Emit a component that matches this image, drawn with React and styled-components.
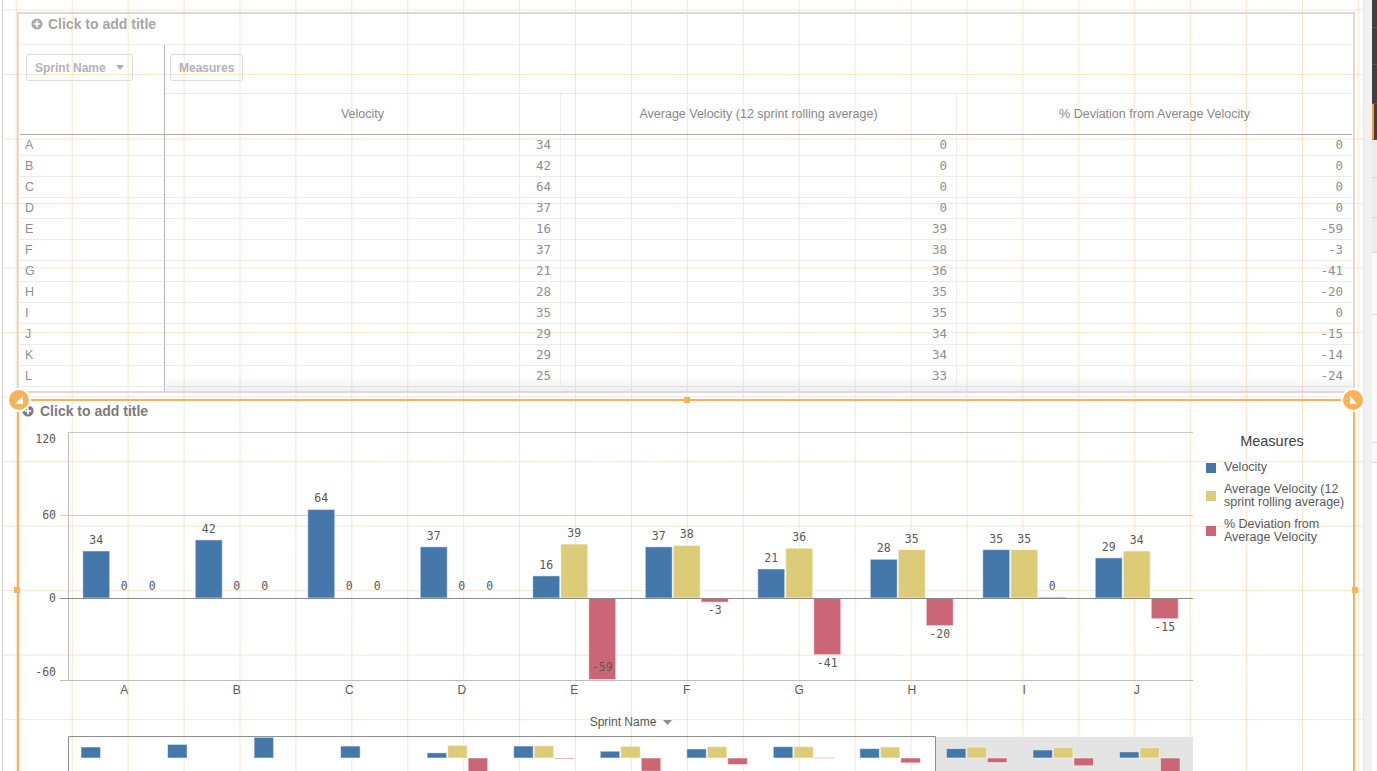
import React, { Fragment } from "react";
import styled, { createGlobalStyle } from "styled-components";

const GlobalStyle = createGlobalStyle`
	html, body {
		margin: 0;
		padding: 0;
		background: #ffffff;
		overflow: hidden;
	}
	body {
		font-family: "Liberation Sans", Arial, sans-serif;
	}
	* {
		box-sizing: border-box;
	}
`;

const sprints = [
	{ name: "A", velocity: 34, average: 0, deviation: 0 },
	{ name: "B", velocity: 42, average: 0, deviation: 0 },
	{ name: "C", velocity: 64, average: 0, deviation: 0 },
	{ name: "D", velocity: 37, average: 0, deviation: 0 },
	{ name: "E", velocity: 16, average: 39, deviation: -59 },
	{ name: "F", velocity: 37, average: 38, deviation: -3 },
	{ name: "G", velocity: 21, average: 36, deviation: -41 },
	{ name: "H", velocity: 28, average: 35, deviation: -20 },
	{ name: "I", velocity: 35, average: 35, deviation: 0 },
	{ name: "J", velocity: 29, average: 34, deviation: -15 },
	{ name: "K", velocity: 29, average: 34, deviation: -14 },
	{ name: "L", velocity: 25, average: 33, deviation: -24 },
	{ name: "M", velocity: 19, average: 32, deviation: -42 },
];

const measures = [
	{ key: "velocity", label: "Velocity", color: "#4477aa" },
	{ key: "average", label: "Average Velocity (12 sprint rolling average)", color: "#ddcc77" },
	{ key: "deviation", label: "% Deviation from Average Velocity", color: "#cc6677" },
];

const MONO = '"DejaVu Sans Mono", "Liberation Mono", monospace';
const SANS = '"Liberation Sans", Arial, sans-serif';

function PlusIcon({ color }) {
	return (
		<svg width="12" height="12" viewBox="0 0 12 12">
			<circle cx="6" cy="6" r="5.6" fill={color} />
			<path d="M6 2.8v6.4M2.8 6h6.4" stroke="#fff" strokeWidth="1.7" />
		</svg>
	);
}

export default function App() {
	return (
		<>
			<GlobalStyle />
			<Page>
				<LeftEdge />
				<Canvas>
					<TablePanel>
						<TitleRow>
							<PlusIcon color="#ababab" />
							<TitleText muted>Click to add title</TitleText>
						</TitleRow>
						<Table>
							<DimHeader>
								<PillButton>
									Sprint Name <Caret />
								</PillButton>
							</DimHeader>
							<MeasureBar>
								<PillButton>Measures</PillButton>
							</MeasureBar>
							{measures.map((m, i) => (
								<HeadCell key={m.key} divided={i > 0}>
									{m.label}
								</HeadCell>
							))}
							{sprints.slice(0, 12).map((s) => (
								<Fragment key={s.name}>
									<LabelCell>{s.name}</LabelCell>
									<ValueCell>{s.velocity}</ValueCell>
									<ValueCell divided>{s.average}</ValueCell>
									<ValueCell divided>{s.deviation}</ValueCell>
								</Fragment>
							))}
							<LabelCell filler />
							<ScrollShade />
						</Table>
					</TablePanel>

					<ChartPanel>
						<Handle corner="left">
							<HandleGlyph points="6,14 14,6 14,14" />
						</Handle>
						<Handle corner="right">
							<HandleGlyph points="7,6 7,14 14,14" />
						</Handle>
						<EdgeDot style={{ left: 665, top: -4 }} />
						<EdgeDot style={{ left: -5, top: 186 }} />
						<EdgeDot style={{ right: -5, top: 186 }} />

						<TitleRow chart>
							<PlusIcon color="#7b7b7b" />
							<TitleText>Click to add title</TitleText>
						</TitleRow>
						<ChartBody>
							<BarChart />
							<Legend>
								<LegendTitle>Measures</LegendTitle>
								<LegendList>
									{measures.map((m) => (
										<LegendItem key={m.key}>
											<Swatch color={m.color} />
											<LegendText>{m.label}</LegendText>
										</LegendItem>
									))}
								</LegendList>
							</Legend>
						</ChartBody>
					</ChartPanel>
				</Canvas>
				<RightRail>
					<RailGutter />
					<RailPanel>
						<RailBlock h={28} dark />
						<RailBlock h={37} dark />
						<RailBlock h={39} dark />
						<RailBlock h={36} dark accent />
						<RailBlock h={38} />
						<RailBlock h={40} />
						<RailBlock h={35} />
						<RailBlock h={62} plain />
						<RailBlock h={128} plain />
						<RailBlock h={20} plain />
					</RailPanel>
				</RightRail>
			</Page>
		</>
	);
}

function BarChart() {
	const zero = 598;
	const unit = 83 / 60;
	const left = 68;
	const right = 1193;
	const step = (right - left) / 10;
	const label = { fontFamily: MONO, fontSize: 11.5, fill: "#595959", textAnchor: "middle" };

	const miniStep = (right - left) / 13;
	const miniZero = 758;
	const miniUnit = 11 / 34;

	return (
		<svg width="1177" height="360" viewBox="19 421 1177 360">
			{/* grid lines and axes */}
			<line x1="68" y1="432.5" x2={right} y2="432.5" stroke="#c9c9c9" />
			<line x1="60" y1="515.5" x2={right} y2="515.5" stroke="#cfcfcf" />
			<line x1="60" y1="680.5" x2={right} y2="680.5" stroke="#bdbdbd" />
			<line x1="68.5" y1="432" x2="68.5" y2="681" stroke="#bdbdbd" />

			{[
				["120", 443],
				["60", 519],
				["0", 602],
				["-60", 676],
			].map(([t, yy]) => (
				<text key={t} x="56" y={yy} fontFamily={MONO} fontSize="11.5" fill="#595959" textAnchor="end">
					{t}
				</text>
			))}

			{sprints.slice(0, 10).map((s, i) => {
				const c = left + step * (i + 0.5);
				return (
					<g key={s.name}>
						{measures.map((m, j) => {
							const v = s[m.key];
							const x = c + (j - 1) * 28 - 13.5;
							const cx = x + 13.5;
							if (v === 0) {
								return (
									<g key={m.key}>
										{s.average > 0 && <rect x={x} y={zero - 1} width="27" height="1.5" fill={m.color} opacity="0.45" />}
										<text {...label} x={cx} y={zero - 8}>
											0
										</text>
									</g>
								);
							}
							const h = Math.abs(v) * unit;
							const top = v > 0 ? zero - h : zero;
							let ly = v > 0 ? top - 7 : top + h + 12;
							if (v < 0 && top + h + 14 > 680) ly = top + h - 9;
							return (
								<g key={m.key}>
									<rect x={x} y={top} width="27" height={h} fill={m.color} stroke="#ffffff" strokeOpacity="0.55" />
									<text {...label} x={cx} y={ly}>
										{v}
									</text>
								</g>
							);
						})}
						<text x={c} y="694" fontFamily={SANS} fontSize="12" fill="#595959" textAnchor="middle">
							{s.name}
						</text>
					</g>
				);
			})}
			<line x1="60" y1="598.5" x2={right} y2="598.5" stroke="#8a8a8a" />

			<text x="623" y="726" fontFamily={SANS} fontSize="12" fill="#595959" textAnchor="middle">
				Sprint Name
			</text>
			<path d="M663 720h9l-4.5 5z" fill="#8c8c8c" />

			{/* mini navigator */}
			<rect x="936" y="737" width={right - 936} height="50" fill="#e4e4e4" />
			<path d="M68.5 781V736.5H935.5V781" fill="none" stroke="#8c8c8c" />
			{sprints.map((s, i) => {
				const c = left + miniStep * (i + 0.5);
				return measures.map((m, j) => {
					const v = s[m.key];
					const x = c + (j - 1) * 20.5 - 9.75;
					if (v === 0) {
						return s.average > 0 ? <rect key={s.name + m.key} x={x} y={miniZero - 0.5} width="19.5" height="1" fill={m.color} opacity="0.4" /> : null;
					}
					const h = Math.abs(v) * miniUnit;
					return (
						<rect
							key={s.name + m.key}
							x={x}
							y={v > 0 ? miniZero - h : miniZero}
							width="19.5"
							height={h}
							fill={m.color}
							stroke="#ffffff"
							strokeOpacity="0.5"
						/>
					);
				});
			})}
		</svg>
	);
}

const Page = styled.div`
	display: flex;
	width: 1377px;
	height: 771px;
	overflow: hidden;
`;

const LeftEdge = styled.div`
	width: 3px;
	background: #f2f2f2;
	border-left: 2px solid #ffffff;
	border-right: 1px solid #cfcfcf;
`;

const Canvas = styled.div`
	flex: 1;
	padding: 12px 0 0 14px;
	background-color: #ffffff;
	background-image: linear-gradient(to right, rgba(247, 160, 70, 0.28) 1px, transparent 1px),
		linear-gradient(to bottom, rgba(247, 160, 70, 0.28) 1px, transparent 1px);
	background-size: 55.93px 64.53px;
	background-position: 12.8px 9.5px;
`;

const TablePanel = styled.div`
	width: 1338px;
	height: 381px;
	border: 2px solid #dadada;
`;

const TitleRow = styled.div`
	display: flex;
	align-items: center;
	gap: ${(p) => (p.chart ? "6px" : "5px")};
	height: 20px;
	padding-left: ${(p) => (p.chart ? "3px" : "12px")};
	margin-bottom: ${(p) => (p.chart ? "0" : "10px")};
`;

const TitleText = styled.span`
	font-family: "Liberation Sans", Arial, sans-serif;
	font-weight: 700;
	font-size: 14px;
	color: ${(p) => (p.muted ? "#a6a6a6" : "#7b7b7b")};
`;

const Table = styled.div`
	position: relative;
	display: grid;
	grid-template-columns: 145px 395px 396px 396px;
	grid-template-rows: 48px 42px repeat(12, 21px) 4px;
	width: 1332px;
	margin-left: 1px;
	border-top: 1px solid #ededed;
`;

const DimHeader = styled.div`
	grid-row: 1 / 3;
	padding: 9px 0 0 6px;
	border-right: 1px solid #b4b4b4;
	border-bottom: 1px solid #acacac;
`;

const MeasureBar = styled.div`
	grid-column: 2 / 5;
	padding: 9px 0 0 5px;
`;

const PillButton = styled.div`
	display: inline-flex;
	align-items: center;
	gap: 10px;
	height: 27px;
	padding: 0 8px;
	border: 1px solid #dcdcdc;
	border-radius: 3px;
	font-weight: 700;
	font-size: 12px;
	color: #b3b3b3;
`;

const Caret = styled.span`
	width: 0;
	height: 0;
	border-left: 4.5px solid transparent;
	border-right: 4.5px solid transparent;
	border-top: 5px solid #b0b0b0;
`;

const HeadCell = styled.div`
	display: flex;
	align-items: center;
	justify-content: center;
	border-top: 1px solid #e8e8e8;
	border-bottom: 1px solid #acacac;
	border-left: ${(p) => (p.divided ? "1px solid #ececec" : "none")};
	font-size: 12.5px;
	color: #878787;
`;

const LabelCell = styled.div`
	padding-left: 5px;
	border-right: 1px solid #b4b4b4;
	border-bottom: ${(p) => (p.filler ? "none" : "1px solid #ebebeb")};
	font-size: 12.5px;
	line-height: 20px;
	color: #8f8f8f;
`;

const ValueCell = styled.div`
	padding-right: 9px;
	text-align: right;
	border-bottom: 1px solid #ebebeb;
	border-left: ${(p) => (p.divided ? "1px solid #efefef" : "none")};
	font-family: ${MONO};
	font-size: 12.5px;
	line-height: 20px;
	color: #8f8f8f;
`;

const ScrollShade = styled.div`
	position: absolute;
	left: 146px;
	right: 0;
	bottom: 0;
	height: 16px;
	background: linear-gradient(to bottom, rgba(0, 0, 0, 0), rgba(0, 0, 0, 0.06));
	pointer-events: none;
`;

const ChartPanel = styled.div`
	position: relative;
	width: 1338px;
	height: 380px;
	margin-top: 6px;
	border: 2px solid #f8b35a;
	border-bottom: none;
`;

const Handle = styled.div`
	position: absolute;
	top: -13px;
	${(p) => (p.corner === "left" ? "left: -12px;" : "right: -12px;")}
	width: 24px;
	height: 24px;
	border-radius: 50%;
	border: 2px solid #ffffff;
	background: #f8b35a;
	z-index: 2;
	display: flex;
	align-items: center;
	justify-content: center;
`;

function HandleGlyph({ points }) {
	return (
		<svg width="20" height="20" viewBox="0 0 20 20">
			<polygon points={points} fill="#ffffff" />
		</svg>
	);
}

const EdgeDot = styled.div`
	position: absolute;
	width: 6px;
	height: 6px;
	background: #f8b35a;
	z-index: 2;
`;

const ChartBody = styled.div`
	display: flex;
`;

const Legend = styled.div`
	width: 157px;
	padding: 12px 0 0 10px;
	display: flex;
	flex-direction: column;
`;

const LegendTitle = styled.div`
	text-align: center;
	padding-right: 15px;
	font-size: 14.5px;
	line-height: 17px;
	color: #404040;
`;

const LegendList = styled.div`
	display: flex;
	flex-direction: column;
	gap: 9px;
	margin-top: 11px;
`;

const LegendItem = styled.div`
	display: flex;
	align-items: center;
	gap: 8px;
`;

const Swatch = styled.span`
	flex: none;
	width: 10px;
	height: 10px;
	background: ${(p) => p.color};
`;

const LegendText = styled.span`
	width: 128px;
	font-size: 12.5px;
	line-height: 13px;
	color: #595959;
`;

const RightRail = styled.div`
	display: flex;
	width: 14px;
`;

const RailGutter = styled.div`
	width: 9px;
	background: #f1f1f1;
	border-left: 1px solid #e6e6e6;
`;

const RailPanel = styled.div`
	flex: 1;
	display: flex;
	flex-direction: column;
	background: #ffffff;
`;

const RailBlock = styled.div`
	flex: none;
	height: ${(p) => p.h}px;
	background: ${(p) => (p.dark ? "#3f3f3f" : p.plain ? "#fbfbfb" : "#ececec")};
	border-bottom: 1px solid ${(p) => (p.dark ? "#575757" : "#d6d6d6")};
	border-left: ${(p) => (p.accent ? "2px solid #f7a238" : "none")};
`;
